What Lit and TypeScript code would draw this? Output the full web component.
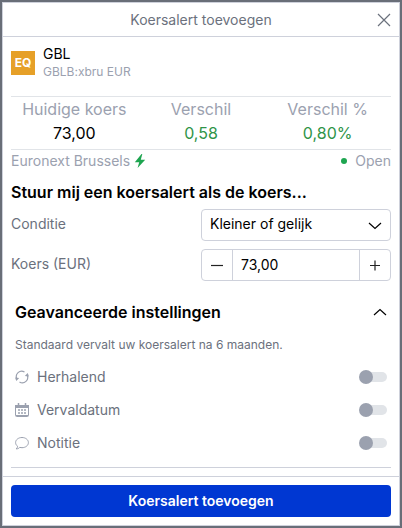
import { LitElement, html, css, svg } from "lit";
import { customElement, property } from "lit/decorators.js";

const icons = {
  repeat: svg`<path d="M9.500 2A5.300 5.300 0 0 0 2 9M4.500 12A5.300 5.300 0 0 0 12 5" fill="none" stroke="currentColor" stroke-width="1.200"/><path d="M0 7.400 4.200 7.900 1.300 11zM14 6.600 9.800 6.100 12.700 3z" fill="currentColor"/>`,
  calendar: svg`<path d="M3.500 0v3M10.500 0v3" stroke="currentColor" stroke-width="1.500"/><path d="M0 2h14v3H0z" fill="currentColor"/><rect x=".5" y="2.500" width="13" height="11" rx="1" fill="none" stroke="currentColor"/><path d="M3 6h2v2H3zM6 6h2v2H6zM9 6h2v2H9zM3 9h2v2H3zM6 9h2v2H6zM9 9h2v2H9z" fill="currentColor" opacity=".75"/><path d="M1 12.500h12" stroke="currentColor"/>`,
  note: svg`<path d="M7 1.500C3.500 1.500.6 3.700.6 6.600c0 1.500.8 2.800 2 3.700 0 1-.6 1.900-1.400 2.600 1.500 0 2.700-.5 3.500-1.500.7.200 1.500.3 2.300.3 3.500 0 6.400-2.200 6.400-5.100S10.500 1.500 7 1.500z" fill="none" stroke="currentColor" stroke-width="1"/>`,
};

@customElement("option-toggle")
class OptionToggle extends LitElement {
  @property() label = "";
  @property() icon: keyof typeof icons = "note";

  static styles = css`
    :host { display: block; }
    label { display: flex; align-items: center; gap: 8px; height: 33px; }
    svg { width: 14px; height: 14px; color: #9ba1af; }
    span { flex: 1; font-size: 14px; line-height: 20px; color: #6b717d; }
    input {
      appearance: none;
      display: flex;
      align-items: center;
      position: relative;
      width: 28px;
      height: 14px;
      margin: 0;
    }
    input::before {
      content: "";
      position: absolute;
      inset: 2px 0 2px 4px;
      border-radius: 5px;
      background: #e1e4e8;
    }
    input::after {
      content: "";
      position: relative;
      width: 14px;
      height: 14px;
      border-radius: 50%;
      background: #9ba1af;
    }
    input:checked::after { margin-left: auto; background: #0037d2; }
  `;

  render() {
    return html`<label>
      <svg viewBox="0 0 14 14" aria-hidden="true">${icons[this.icon]}</svg>
      <span>${this.label}</span>
      <input type="checkbox" role="switch" />
    </label>`;
  }
}

@customElement("app-root")
class AppRoot extends LitElement {
  static styles = css`
    :host {
      display: flex;
      box-sizing: border-box;
      min-height: 100vh;
      padding: 2px;
      background: #696e78;
      font-family: Inter, "Liberation Sans", sans-serif;
      font-size: 14px;
      line-height: 20px;
      color: #6b717d;
    }
    * { box-sizing: border-box; }
    button, input, select { font: inherit; }
    h1, h2, p, dl, dd { margin: 0; }
    .dialog {
      flex: 1;
      display: flex;
      flex-direction: column;
      min-width: 0;
      background: #fff;
      border: 1px solid #ced1db;
    }
    .top {
      display: flex;
      align-items: center;
      justify-content: center;
      position: relative;
      height: 34px;
      border-bottom: 1px solid #ced1db;
    }
    .top h1 { font-size: 14px; line-height: 20px; font-weight: 400; }
    .close {
      position: absolute;
      right: 8px;
      display: flex;
      padding: 0;
      border: 0;
      background: none;
      color: #6b717d;
    }
    .body { flex: 1; padding: 0 8px; }
    .instrument { display: flex; align-items: center; gap: 8px; height: 59px; padding-bottom: 8px; }
    .badge {
      width: 24px;
      height: 24px;
      background: #e6a028;
      color: #fff;
      font-size: 12px;
      line-height: 24px;
      font-weight: 700;
      text-align: center;
    }
    .name, .code { line-height: 18px; }
    .name { color: #000; }
    .code { font-size: 12px; color: #9ba1af; }
    .stats {
      display: grid;
      grid-template-columns: repeat(3, 1fr);
      height: 54px;
      border: solid #e1e4e8;
      border-width: 1px 0;
      font-size: 16px;
      line-height: 24px;
      text-align: center;
    }
    .stats dt { color: #9ba1af; }
    .stats dd { color: #000; }
    .stats .up { color: #2f9448; }
    .market { display: flex; align-items: center; gap: 4px; height: 22px; color: #9ba1af; }
    .state { display: flex; align-items: center; gap: 8px; margin-left: auto; }
    .dot { width: 6px; height: 6px; border-radius: 50%; background: #1ea550; }
    h2 { font-size: 16px; line-height: 24px; font-weight: 600; color: #000; }
    .ask { padding: 8px 0 5px; }
    .fields {
      display: grid;
      grid-template-columns: repeat(2, minmax(0, 1fr));
      row-gap: 8px;
      align-items: center;
    }
    .fields label { padding-bottom: 2px; }
    .box {
      display: flex;
      align-items: stretch;
      position: relative;
      height: 32px;
      border: 1px solid #ced1db;
      border-radius: 4px;
      color: #000;
    }
    select {
      appearance: none;
      flex: 1;
      min-width: 0;
      padding: 0 32px 2px 8px;
      border: 0;
      background: none;
      color: #000;
    }
    .arrow { position: absolute; right: 8px; top: 8px; pointer-events: none; }
    .box input {
      flex: 1;
      min-width: 0;
      padding: 0 8px;
      border: solid #ced1db;
      border-width: 0 1px;
      background: none;
      color: #000;
    }
    .box button {
      display: flex;
      align-items: center;
      justify-content: center;
      width: 30px;
      padding: 0;
      border: 0;
      background: none;
      color: #222;
    }
    .advanced { padding: 16px 4px 8px; border-bottom: 1px solid #ced1db; }
    .toggle {
      display: flex;
      justify-content: space-between;
      align-items: center;
      width: 100%;
      height: 30px;
      padding: 0;
      border: 0;
      background: none;
      font-weight: 600;
      font-size: 16px;
      color: #000;
    }
    .hint { padding: 9px 0 6px; font-size: 12px; line-height: 18px; }
    .bottom { padding: 8px; border-top: 1px solid #ced1db; }
    .submit {
      width: 100%;
      height: 32px;
      border: 0;
      border-radius: 4px;
      background: #0037d2;
      color: #fff;
      font-weight: 600;
    }
    svg { display: block; }
    .line { fill: none; stroke: currentColor; stroke-width: 1.2; }
  `;

  render() {
    return html`
      <section class="dialog" role="dialog" aria-labelledby="title">
        <header class="top">
          <h1 id="title">Koersalert toevoegen</h1>
          <button class="close" aria-label="Sluiten">
            <svg width="14" height="14" viewBox="0 0 14 14"><path class="line" d="M1 1l12 12M13 1 1 13" /></svg>
          </button>
        </header>
        <div class="body">
          <div class="instrument">
            <div class="badge">EQ</div>
            <div>
              <p class="name">GBL</p>
              <p class="code">GBLB:xbru EUR</p>
            </div>
          </div>
          <dl class="stats">
            <div><dt>Huidige koers</dt><dd>73,00</dd></div>
            <div><dt>Verschil</dt><dd class="up">0,58</dd></div>
            <div><dt>Verschil %</dt><dd class="up">0,80%</dd></div>
          </dl>
          <div class="market">
            <span>Euronext Brussels</span>
            <svg width="14" height="14" viewBox="0 0 14 14"><path fill="#1ea550" d="M7.500 0 .8 8.300h4.400L3.600 14 11.200 5.800H6.800L8.300 0z" /></svg>
            <span class="state"><i class="dot"></i>Open</span>
          </div>
          <h2 class="ask">Stuur mij een koersalert als de koers...</h2>
          <div class="fields">
            <label for="condition">Conditie</label>
            <div class="box">
              <select id="condition"><option>Kleiner of gelijk</option></select>
              <svg class="arrow" width="14" height="14" viewBox="0 0 14 14"><path class="line" d="M1 5l6 5.500L13 5" /></svg>
            </div>
            <label for="price">Koers (EUR)</label>
            <div class="box">
              <button aria-label="Verlagen"><svg width="12" height="12" viewBox="0 0 12 12"><path class="line" d="M0 6.500h12" /></svg></button>
              <input id="price" value="73,00" inputmode="decimal" />
              <button aria-label="Verhogen"><svg width="12" height="12" viewBox="0 0 12 12"><path class="line" d="M1 6.500h10M6 1.500v10" /></svg></button>
            </div>
          </div>
          <div class="advanced">
            <button class="toggle" aria-expanded="true">
              Geavanceerde instellingen
              <svg width="14" height="14" viewBox="0 0 14 14"><path class="line" d="M1 10l6-5.500L13 10" /></svg>
            </button>
            <p class="hint">Standaard vervalt uw koersalert na 6 maanden.</p>
            <option-toggle label="Herhalend" icon="repeat"></option-toggle>
            <option-toggle label="Vervaldatum" icon="calendar"></option-toggle>
            <option-toggle label="Notitie" icon="note"></option-toggle>
          </div>
        </div>
        <footer class="bottom"><button class="submit">Koersalert toevoegen</button></footer>
      </section>
    `;
  }
}
